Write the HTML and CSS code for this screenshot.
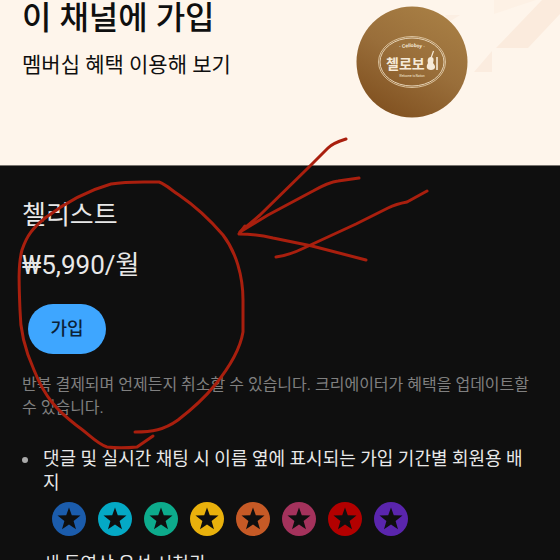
FILE: index.html
```html
<!DOCTYPE html>
<html lang="ko">
<head>
  <meta charset="UTF-8">
  <meta name="viewport" content="width=device-width, initial-scale=1">
  <title>이 채널에 가입</title>
  <link rel="stylesheet" href="styles.css">
</head>
<body>
  <header class="banner">
    <svg class="banner-pattern" width="120" height="90" viewBox="0 0 120 90" aria-hidden="true">
      <path d="M54 0H96L54 14Z" fill="#fdf1e5"/>
      <path d="M102 0H120V14L88 48H56Z" fill="#fbebdd"/>
      <path d="M34 72L52 51V72Z" fill="#fbecdf"/>
      <path d="M5 15H20L9 22Z" fill="#fcefe3"/>
    </svg>
    <div class="banner-text">
      <h1>이 채널에 가입</h1>
      <p>멤버십 혜택 이용해 보기</p>
    </div>
    <svg class="avatar" width="112" height="112" viewBox="0 0 112 112" role="img" aria-label="첼로보이">
      <defs>
        <linearGradient id="gold" x1="0.8" y1="0" x2="0.25" y2="1">
          <stop offset="0" stop-color="#a98045"/>
          <stop offset="0.5" stop-color="#996e3a"/>
          <stop offset="1" stop-color="#80501f"/>
        </linearGradient>
        <path id="arc" d="M36 45Q56 37 76 45"/>
      </defs>
      <circle cx="56" cy="56" r="55.5" fill="url(#gold)"/>
      <ellipse cx="56" cy="56" rx="33.5" ry="25.5" fill="none" stroke="#d9c09b" stroke-width="1"/>
      <ellipse cx="56" cy="56" rx="32" ry="24" fill="none" stroke="#e5d2b5" stroke-width="1"/>
      <text class="logo-small" text-anchor="middle"><textPath href="#arc" startOffset="50%">· Celloboy ·</textPath></text>
      <text class="logo-name" x="30" y="63">첼로보</text>
      <path d="M77.500 45L75 52" stroke="#f6ead8" stroke-width="1.200"/>
      <path d="M75 51C78 51 78 54 77 57C80 60 80 64 75 64C70 64 70 60 72 57C71 54 72 51 75 51Z" fill="#f6ead8"/>
      <path d="M81 51V64" stroke="#f6ead8" stroke-width="1.600"/>
      <text class="logo-tiny" x="56" y="71" text-anchor="middle">Welcome to Nation</text>
    </svg>
  </header>

  <main class="tier">
    <h2>첼리스트</h2>
    <p class="price">₩5,990/월</p>
    <button class="join" type="button">가입</button>
    <p class="note">반복 결제되며 언제든지 취소할 수 있습니다. 크리에이터가 혜택을 업데이트할 수 있습니다.</p>
    <ul class="perks">
      <li>
        댓글 및 실시간 채팅 시 이름 옆에 표시되는 가입 기간별 회원용 배지
        <div class="badges">
          <svg class="badge blue" viewBox="0 0 34 34"><circle cx="17" cy="17" r="17"/><use href="#star"/></svg>
          <svg class="badge cyan" viewBox="0 0 34 34"><circle cx="17" cy="17" r="17"/><use href="#star"/></svg>
          <svg class="badge green" viewBox="0 0 34 34"><circle cx="17" cy="17" r="17"/><use href="#star"/></svg>
          <svg class="badge yellow" viewBox="0 0 34 34"><circle cx="17" cy="17" r="17"/><use href="#star"/></svg>
          <svg class="badge orange" viewBox="0 0 34 34"><circle cx="17" cy="17" r="17"/><use href="#star"/></svg>
          <svg class="badge pink" viewBox="0 0 34 34"><circle cx="17" cy="17" r="17"/><use href="#star"/></svg>
          <svg class="badge red" viewBox="0 0 34 34"><circle cx="17" cy="17" r="17"/><use href="#star"/></svg>
          <svg class="badge purple" viewBox="0 0 34 34"><circle cx="17" cy="17" r="17"/><use href="#star"/></svg>
        </div>
      </li>
      <li>새 동영상 우선 시청권</li>
    </ul>
  </main>

  <!-- hand-drawn circle and arrow over the join button -->
  <svg class="marker" width="560" height="560" viewBox="0 0 560 560" aria-hidden="true">
    <defs>
      <path id="star" d="M17 5.500L19.800 13.300L28.500 13.600L21.600 18.900L24 27.300L17 22.500L10 27.300L12.400 18.900L5.500 13.600L14.200 13.300Z"/>
    </defs>
    <path d="M153 436L137 447C127 448 115 448 107 447C97 444 89 434 76 425C58 411 45 398 34 370C25 350 20 332 20 310C19 285 18 265 22 250C27 235 33 228 45 218C65 203 86 191 111 184C128 181 144 182 159 182C167 185 171 190 179 195C198 208 211 221 223 235C236 252 243 276 243 300V332C240 350 228 369 215 385C202 401 191 410 178 420C164 430 152 432 135 432"/>
    <path d="M346 139Q333 143 328 148L308 168L260 215L240 232L268 215L313 191Q329 182 338 181L359 178"/>
    <path d="M245 226L239 234Q256 234 273 238L312 246L366 260"/>
    <path d="M276 257Q290 255 304 248L356 224L388 208Q396 204 407 202L427 191"/>
  </svg>
</body>
</html>
```
FILE: styles.css
```css
* {
  box-sizing: border-box;
}
body {
  margin: 0;
  height: 100vh;
  overflow: hidden;
  position: relative;
  font-family: Roboto, "Noto Sans CJK KR", sans-serif;
  background: #0f0f0f;
  color: #e8e8e8;
  word-break: break-all;
}
h1, h2, p {
  margin: 0;
  font-weight: 400;
}

/* Cream banner with the channel avatar */
.banner {
  position: relative;
  display: flex;
  justify-content: space-between;
  height: 166px;
  padding: 0 92px 0 22px;
  background: #fef5eb;
  border-bottom: 1px solid #77736e;
  color: #0f0f0f;
}
.banner-pattern {
  position: absolute;
  top: 0;
  right: 0;
}
.banner h1 {
  font-size: 32px;
  font-weight: 500;
  line-height: 36px;
}
.banner p {
  margin-top: 16px;
  font-size: 21px;
  line-height: 26px;
}
.avatar {
  position: relative;
  margin-top: 6px;
}
.avatar text {
  fill: #f6ead8;
}
.logo-small {
  font-size: 5px;
  font-weight: 700;
}
.logo-name {
  font-size: 14px;
  font-weight: 700;
}
.logo-tiny {
  font-size: 3px;
}

/* Membership tier */
.tier {
  padding: 31px 30px 0 22px;
}
.tier h2 {
  font-size: 26px;
  line-height: 36px;
}
.price {
  margin-top: 14px;
  font-size: 26px;
  line-height: 36px;
}
.join {
  display: block;
  width: 78px;
  height: 50px;
  margin: 21px 0 0 6px;
  padding: 0 0 4px;
  border: none;
  border-radius: 25px;
  background: #3ea6ff;
  color: #0c2238;
  font-family: inherit;
  font-size: 18px;
  font-weight: 500;
}
.note {
  margin-top: 19px;
  font-size: 16px;
  line-height: 23px;
  color: #808080;
}
.perks {
  margin: 28px 0 0;
  padding: 0;
  list-style: none;
  font-size: 18px;
  line-height: 24px;
}
.perks li {
  position: relative;
  padding-left: 21px;
}
.perks li + li {
  margin-top: 8px;
}
.perks li::before {
  content: "";
  position: absolute;
  left: 0;
  top: 10px;
  width: 6px;
  height: 6px;
  border-radius: 50%;
  background: #aaa;
}
.badges {
  display: flex;
  gap: 12px;
  padding: 7px 0 8px 9px;
}
.badge {
  width: 34px;
  height: 34px;
}
.badge use {
  fill: #0f0f0f;
}
.blue { fill: #1b5cac; }
.cyan { fill: #04a9c5; }
.green { fill: #0dab8c; }
.yellow { fill: #e9b10c; }
.orange { fill: #c65a26; }
.pink { fill: #a4325c; }
.red { fill: #b30000; }
.purple { fill: #5a25ad; }

.marker {
  position: absolute;
  top: 0;
  left: 0;
  pointer-events: none;
}
.marker > path {
  fill: none;
  stroke: #a91f0e;
  stroke-width: 3;
  stroke-linecap: round;
  stroke-linejoin: round;
}
```
